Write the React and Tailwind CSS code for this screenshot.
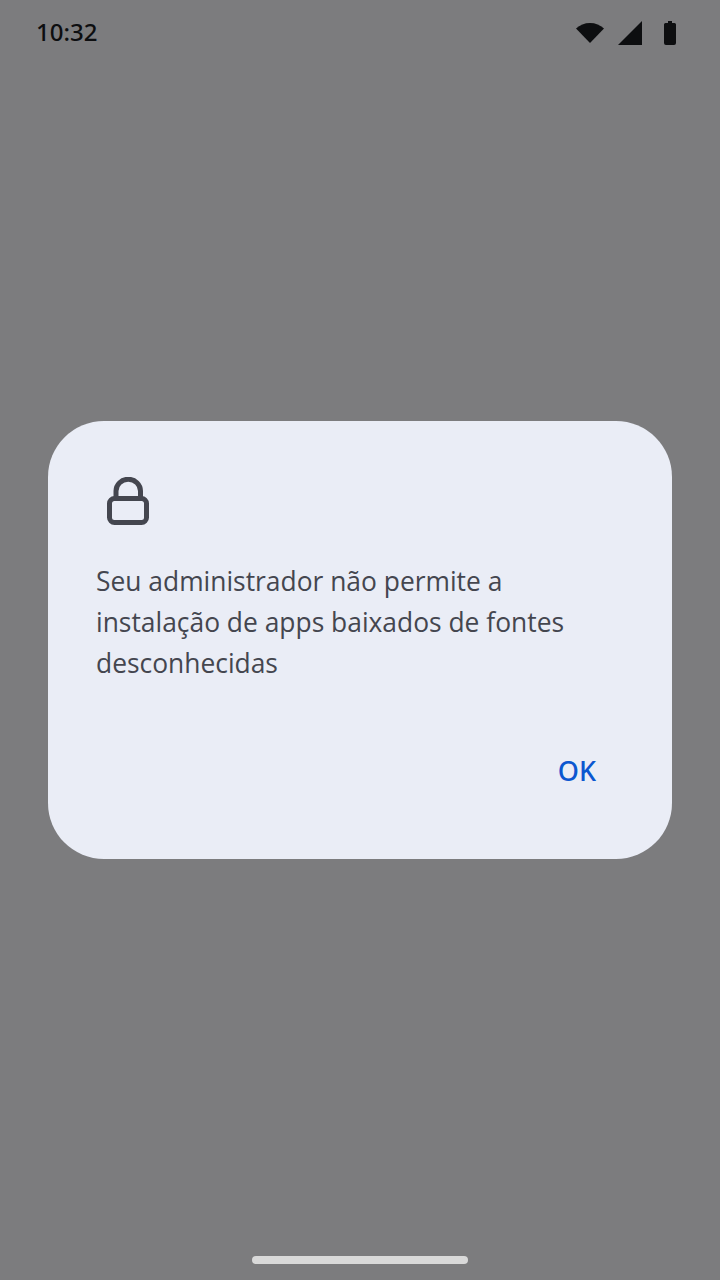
import React from "react";

const fontFamily = "font-['Open_Sans','Noto_Sans',sans-serif]";

const StatusIcons = () => (
  <div className="flex items-center">
    {/* wifi */}
    <svg width="28" height="20" viewBox="0 0 28 20" className="mr-[14px]">
      <path d="M0 5.5C3.8 2 8.6 0 14 0s10.200 2 14 5.500L14 20z" fill="#0d0e10" />
    </svg>
    {/* signal */}
    <svg width="24" height="24" viewBox="0 0 24 24" className="mr-[22px]">
      <path d="M24 0v24H0z" fill="#0d0e10" />
    </svg>
    {/* battery */}
    <svg width="12" height="24" viewBox="0 0 12 24">
      <path
        d="M4 0h4v2h2.500A1.500 1.500 0 0 1 12 3.500V22a2 2 0 0 1-2 2H2a2 2 0 0 1-2-2V3.500A1.500 1.500 0 0 1 1.500 2H4z"
        fill="#0d0e10"
      />
    </svg>
  </div>
);

const LockIcon = () => (
  <svg width="44" height="50" viewBox="0 0 44 50" fill="none" stroke="#44464f" strokeWidth="5">
    <rect x="3.500" y="21.500" width="37" height="24" rx="5" />
    <path d="M10 21v-7a12 11.500 0 0 1 24.500 0v7" />
  </svg>
);

const App = () => {
  return (
    <div className={`flex h-[1280px] w-[720px] flex-col bg-[#7c7c7e] ${fontFamily}`}>
      {/* Barra de estado */}
      <div className="flex h-[66px] items-center justify-between pl-[36px] pr-[44px]">
        <span className="-mt-[2px] font-['Noto_Sans',sans-serif] text-[24px] font-medium leading-none text-[#0d0e10]">10:32</span>
        <StatusIcons />
      </div>

      {/* Dialogo */}
      <div className="flex flex-1 items-center justify-center">
        <div className="flex h-[438px] w-[624px] flex-col rounded-[56px] bg-[#eaedf6] pl-[48px] pr-[76px] pt-[56px]">
          <div className="pl-[10px]">
            <LockIcon />
          </div>
          <p className="mt-[34px] text-[26.400px] leading-[41px] text-[#44464f]">
            Seu administrador não permite a instalação de apps baixados de fontes desconhecidas
          </p>
          <div className="mt-[69px] flex justify-end">
            <button className="font-['Noto_Sans',sans-serif] text-[27px] font-medium leading-[36px] text-[#0b57d0]">OK</button>
          </div>
        </div>
      </div>

      {/* Barra de navegacion */}
      <div className="flex h-[66px] items-end justify-center pb-[16px]">
        <div className="h-[8px] w-[216px] rounded-full bg-[#d9d9d9]" />
      </div>
    </div>
  );
};

export default App;
